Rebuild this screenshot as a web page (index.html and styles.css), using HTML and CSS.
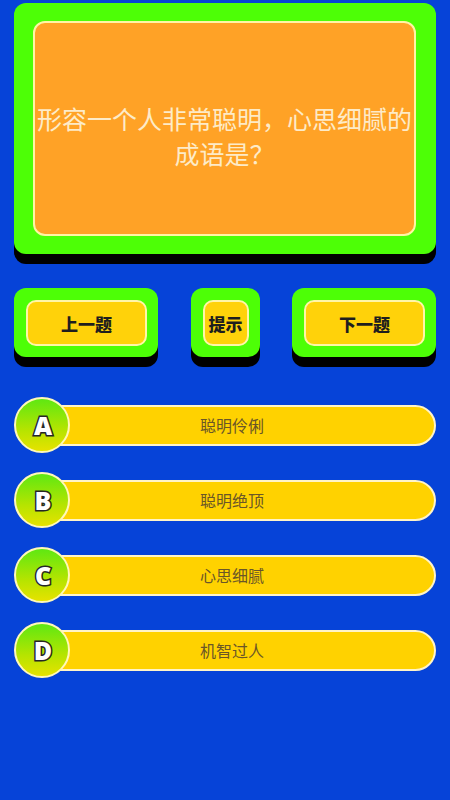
FILE: index.html
```html
<!DOCTYPE html>
<html lang="zh-CN">
<head>
<meta charset="utf-8">
<title>成语问答</title>
<link rel="stylesheet" href="styles.css">
</head>
<body>
<main class="page">
  <section class="question-card">
    <div class="question-inner">
      <p class="question-text">形容一个人非常聪明，心思细腻的成语是？</p>
    </div>
  </section>

  <nav class="nav-row">
    <button class="nav-btn wide"><span class="nav-inner">上一题</span></button>
    <button class="nav-btn narrow"><span class="nav-inner">提示</span></button>
    <button class="nav-btn wide"><span class="nav-inner">下一题</span></button>
  </nav>

  <ul class="options">
    <li class="option"><span class="badge">A</span><span class="bar">聪明伶俐</span></li>
    <li class="option"><span class="badge">B</span><span class="bar">聪明绝顶</span></li>
    <li class="option"><span class="badge">C</span><span class="bar">心思细腻</span></li>
    <li class="option"><span class="badge">D</span><span class="bar">机智过人</span></li>
  </ul>
</main>
</body>
</html>
```

FILE: styles.css
```css
* {
  box-sizing: border-box;
}

html, body {
  margin: 0;
  padding: 0;
}

body {
  width: 450px;
  height: 800px;
  background: #0643d8;
  font-family: "Noto Sans CJK SC", "Noto Sans", sans-serif;
  overflow: hidden;
}

.page {
  padding: 3px 14px 0 14px;
}

.question-card {
  height: 251px;
  background: #4dff06;
  border-radius: 12px;
  padding: 18px 20px 18px 19px;
  box-shadow: 0 10px 0 #000;
}

.question-inner {
  height: 100%;
  background: #ffa226;
  border: 2px solid #fff4a6;
  border-radius: 12px;
  display: flex;
  align-items: center;
  justify-content: center;
  padding-top: 14px;
}

.question-text {
  margin: 0;
  color: #fdebc8;
  font-size: 25px;
  font-weight: 400;
  line-height: 35px;
  text-align: center;
}

.nav-row {
  display: flex;
  justify-content: space-between;
  margin-top: 34px;
}

.nav-btn {
  height: 69px;
  background: #4dff06;
  border: none;
  border-radius: 12px;
  padding: 12px 11px 11px 12px;
  box-shadow: 0 10px 0 #000;
  font-family: inherit;
  display: flex;
}

.nav-btn.wide {
  width: 144px;
}

.nav-btn.narrow {
  width: 69px;
}

.nav-inner {
  flex: 1;
  display: flex;
  align-items: center;
  justify-content: center;
  background: #ffd20a;
  border: 2px solid #fff6a8;
  border-radius: 10px;
  color: #1e1e1e;
  font-size: 17px;
  font-weight: 900;
}

.options {
  list-style: none;
  margin: 40px 0 0 0;
  padding: 0;
  display: flex;
  flex-direction: column;
  gap: 19px;
}

.option {
  display: flex;
  align-items: center;
  height: 56px;
}

.badge {
  position: relative;
  z-index: 1;
  flex: none;
  width: 56px;
  height: 56px;
  border-radius: 50%;
  border: 2px solid #fff8b8;
  background: linear-gradient(to bottom, #5ee812 0%, #b6e400 60%, #e6e200 100%);
  display: flex;
  align-items: center;
  justify-content: center;
  color: #ffffff;
  font-family: "Open Sans", "Noto Sans", sans-serif;
  font-weight: 800;
  font-size: 25px;
  -webkit-text-stroke: 3px #262626;
  paint-order: stroke fill;
  padding-left: 2px;
}

.bar {
  flex: 1;
  height: 41px;
  margin-left: -42px;
  background: #ffd200;
  border: 2px solid #fff4c8;
  border-radius: 21px;
  display: flex;
  align-items: center;
  justify-content: center;
  color: #6a5628;
  font-size: 16px;
}
```
